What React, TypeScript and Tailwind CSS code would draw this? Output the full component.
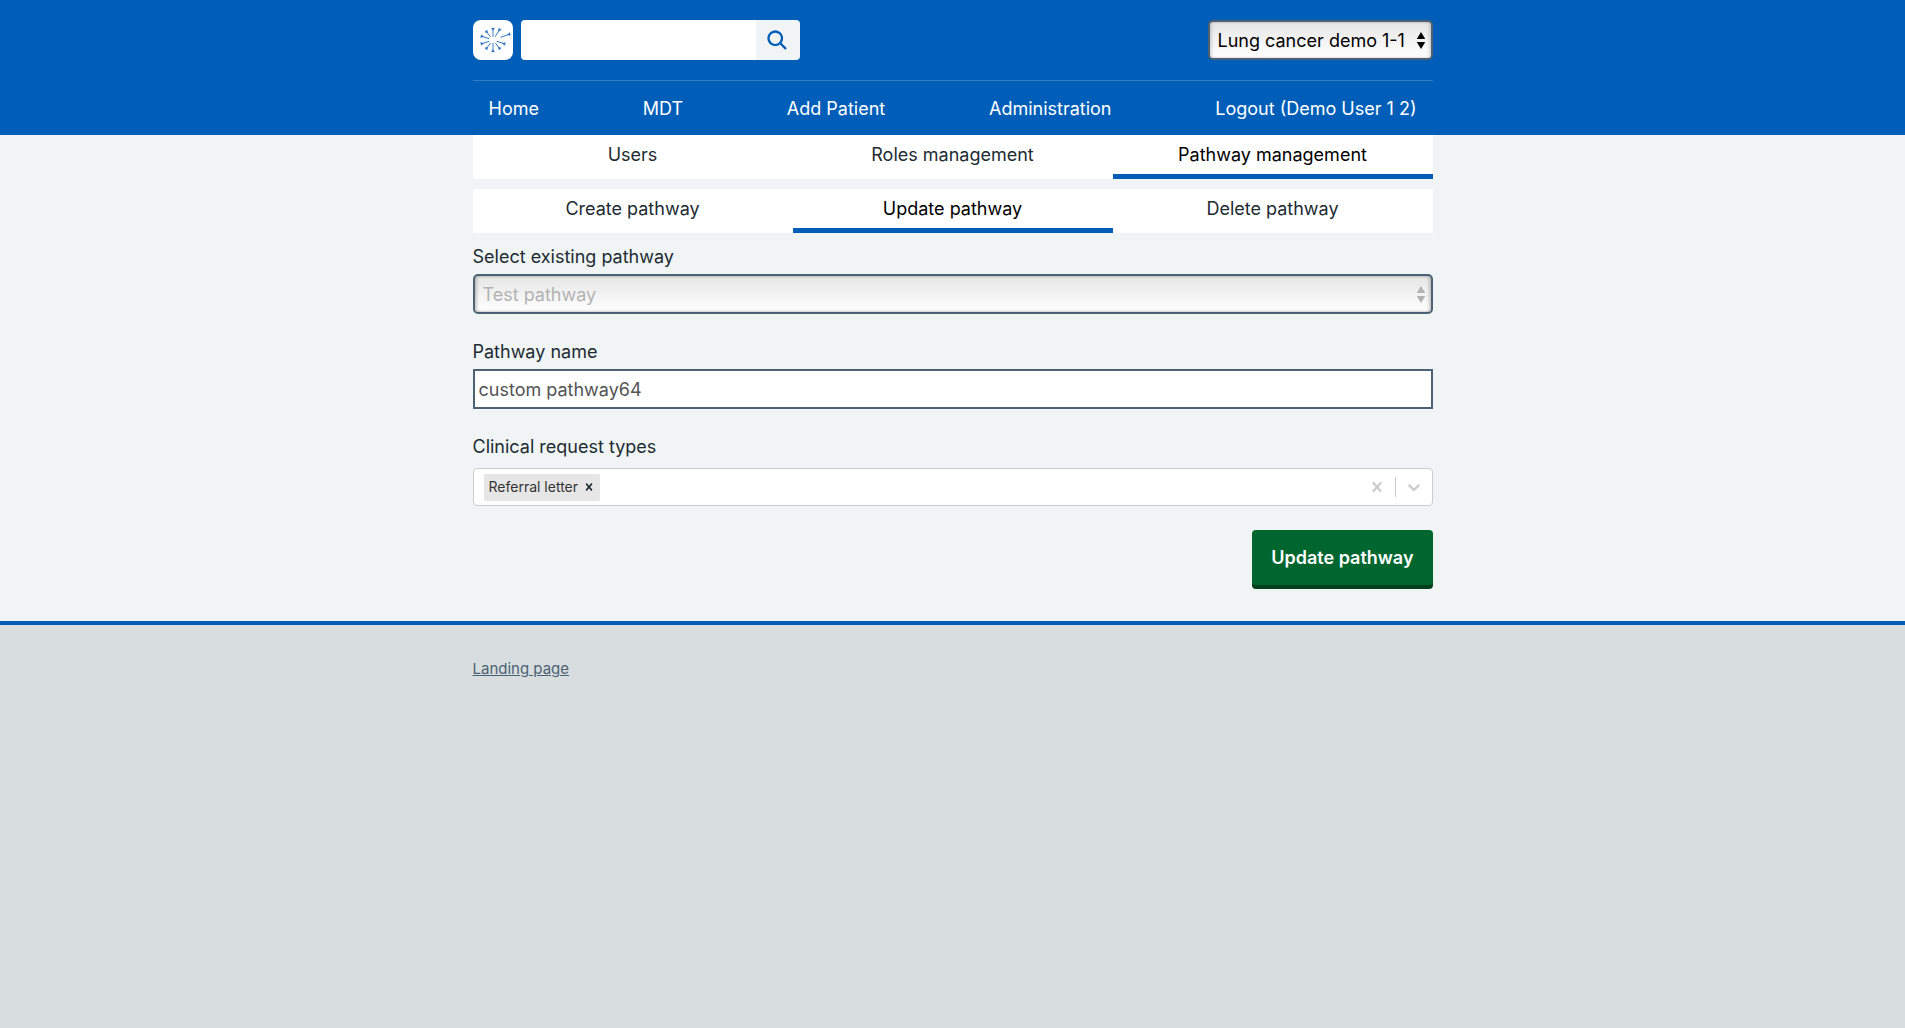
import { useState, type ReactNode } from 'react';

const spokes = [
  [0, -12, 3],
  [7, -11, 4],
  [17, -6, 8],
  [12, 4, 4],
  [7, 9, 4],
  [0, 12, 3],
  [-7, 9, 4],
  [-12, 4, 4],
  [-12, -4, 4],
  [-7, -9, 4],
];

function Logo() {
  return (
    <svg viewBox="0 0 40 40" className="size-10" aria-hidden="true">
      <rect width="40" height="40" rx="8" fill="#fff" />
      <g transform="translate(20 20)" stroke="#2f74bf" fill="#2f74bf">
        {spokes.map(([x, y, inner]) => {
          const r = Math.hypot(x, y);
          const angle = (Math.atan2(y, x) * 180) / Math.PI;
          return (
            <g key={`${x},${y}`} transform={`rotate(${angle})`}>
              <path d={`M${inner} 0H${r}`} strokeWidth="0.9" />
              <path d={`M${r - 2.6} 0L${r} -1.6V1.6Z`} strokeWidth="0.3" />
            </g>
          );
        })}
      </g>
    </svg>
  );
}

function SelectArrows({ className }: { className: string }) {
  return (
    <svg
      viewBox="0 0 8 17"
      fill="currentColor"
      aria-hidden="true"
      className={`pointer-events-none absolute top-3 right-2 h-[17px] w-2 ${className}`}
    >
      <path d="M4 0L8.3 7H-0.3ZM-0.3 10H8.3L4 17Z" />
    </svg>
  );
}

function Container({ children, className = '' }: { children: ReactNode; className?: string }) {
  return <div className={`mx-auto w-full max-w-[960px] ${className}`}>{children}</div>;
}

function Tabs({ label, items, active }: { label: string; items: string[]; active: string }) {
  return (
    <nav aria-label={label} className="grid grid-cols-3 bg-white text-center">
      {items.map((item) => (
        <a
          key={item}
          href="#"
          aria-current={item === active ? 'page' : undefined}
          className={`h-11 border-b-[5px] leading-[39px] ${
            item === active ? 'border-[#005eb8] text-black' : 'border-transparent text-[#212b32]'
          }`}
        >
          {item}
        </a>
      ))}
    </nav>
  );
}

export default function App() {
  const [name, setName] = useState('custom pathway64');
  return (
    <div className="flex min-h-screen flex-col bg-[#f0f4f5] font-['Inter','Liberation_Sans',sans-serif] text-lg text-[#212b32]">
      <header className="bg-[#005eb8] pt-5">
        <Container>
          <div className="flex items-center justify-between pb-5">
            <div className="flex gap-2">
              <a href="#" aria-label="Home page">
                <Logo />
              </a>
              <form role="search" className="flex h-10" onSubmit={(e) => e.preventDefault()}>
                <input
                  type="search"
                  aria-label="Search"
                  className="w-[235px] rounded-l bg-white px-3 text-base outline-none"
                />
                <button
                  type="submit"
                  aria-label="Search"
                  className="flex w-11 items-center justify-center rounded-r bg-[#f0f4f5]"
                >
                  <svg viewBox="0 0 24 24" className="size-[27px] fill-[#005eb8]" aria-hidden="true">
                    <path d="M19.71 18.29l-4.11-4.1a7 7 0 1 0-1.41 1.41l4.1 4.11a1 1 0 0 0 1.42 0 1 1 0 0 0 0-1.42zM5 10a5 5 0 1 1 5 5 5 5 0 0 1-5-5z" />
                  </svg>
                </button>
              </form>
            </div>
            <div className="relative">
              <select
                aria-label="Pathway"
                className="h-10 w-[225px] appearance-none rounded-[5px] border-2 border-[#4c6272] bg-linear-to-b from-[#e6e6e6] to-white pt-0.5 pr-5 pl-2 text-black shadow-[inset_2px_0_3px_#0002,inset_-2px_0_3px_#0002]"
              >
                <option>Lung cancer demo 1-1</option>
              </select>
              <SelectArrows className="text-black" />
            </div>
          </div>
          <nav
            aria-label="Primary"
            className="flex h-[55px] justify-between border-t border-white/20 px-4 leading-14 text-white"
          >
            <a href="#">Home</a>
            <a href="#">MDT</a>
            <a href="#">Add Patient</a>
            <a href="#">Administration</a>
            <a href="#">Logout (Demo User 1 2)</a>
          </nav>
        </Container>
      </header>

      <main className="pb-8">
        <Container className="flex flex-col">
          <div className="flex flex-col gap-2.5">
            <Tabs
              label="Administration"
              items={['Users', 'Roles management', 'Pathway management']}
              active="Pathway management"
            />
            <Tabs
              label="Pathways"
              items={['Create pathway', 'Update pathway', 'Delete pathway']}
              active="Update pathway"
            />
          </div>

          <label htmlFor="existing" className="mt-2.5 mb-[3px] leading-7">
            Select existing pathway
          </label>
          <div className="relative">
            <select
              id="existing"
              disabled
              className="h-10 w-full appearance-none rounded-[5px] border-2 border-[#4c6272] bg-linear-to-b from-[#e6e6e6] to-white pt-0.5 pr-5 pl-2 text-[#b3b3b3] opacity-100 shadow-[inset_2px_0_3px_#0003,inset_-2px_0_3px_#0003]"
            >
              <option>Test pathway</option>
            </select>
            <SelectArrows className="text-[#b3b3b3]" />
          </div>

          <label htmlFor="name" className="mt-6 mb-[3px] leading-7">
            Pathway name
          </label>
          <input
            id="name"
            value={name}
            onChange={(e) => setName(e.target.value)}
            className="h-10 w-full border-2 border-[#4c6272] bg-white px-1 text-[#545454] outline-none"
          />

          <label htmlFor="types" className="mt-6 mb-[7px] leading-7">
            Clinical request types
          </label>
          <div className="flex h-[38px] items-center rounded border border-[#cccccc] bg-white text-[#cccccc]">
            <div className="ml-2.5 flex h-[27px] items-center rounded-xs bg-[#e6e6e6] text-sm text-[#333333]">
              <span className="pl-[5px]">Referral letter</span>
              <button type="button" aria-label="Remove Referral letter" className="px-1 text-[#212b32]">
                <CrossIcon className="size-3.5" />
              </button>
            </div>
            <input id="types" className="min-w-0 flex-1 px-1 text-base text-[#333333] outline-none" />
            <button type="button" aria-label="Clear all" className="px-2">
              <CrossIcon className="size-5" />
            </button>
            <span className="h-5 w-px bg-[#cccccc]" />
            <button type="button" aria-label="Open list" className="px-2">
              <svg viewBox="0 0 20 20" className="size-5 fill-current" aria-hidden="true">
                <path d="M4.516 7.548c0.436-0.446 1.043-0.481 1.576 0l3.908 3.747 3.908-3.747c0.533-0.481 1.141-0.446 1.574 0 0.436 0.445 0.408 1.197 0 1.615-0.406 0.418-4.695 4.502-4.695 4.502-0.217 0.223-0.502 0.335-0.787 0.335s-0.57-0.112-0.789-0.335c0 0-4.287-4.084-4.695-4.502s-0.436-1.17 0-1.615z" />
              </svg>
            </button>
          </div>

          <button
            type="button"
            className="mt-6 mb-1 h-[55px] self-end rounded bg-[#00662f] px-[19px] font-semibold text-white shadow-[0_4px_0_#00401e]"
          >
            Update pathway
          </button>
        </Container>
      </main>

      <footer className="flex-1 border-t-4 border-[#005eb8] bg-[#d8dde0] pt-8">
        <Container>
          <a href="#" className="block w-fit text-[15px] leading-6 text-[#4c6272] underline">
            Landing page
          </a>
        </Container>
      </footer>
    </div>
  );
}

function CrossIcon({ className }: { className: string }) {
  return (
    <svg viewBox="0 0 20 20" fill="currentColor" aria-hidden="true" className={className}>
      <path d="M14.348 14.849c-0.469 0.469-1.229 0.469-1.697 0l-2.651-3.030-2.651 3.029c-0.469 0.469-1.229 0.469-1.697 0-0.469-0.469-0.469-1.229 0-1.697l2.758-3.15-2.759-3.152c-0.469-0.469-0.469-1.228 0-1.697s1.228-0.469 1.697 0l2.652 3.031 2.651-3.031c0.469-0.469 1.228-0.469 1.697 0s0.469 1.229 0 1.697l-2.758 3.152 2.758 3.15c0.469 0.469 0.469 1.229 0 1.698z" />
    </svg>
  );
}
